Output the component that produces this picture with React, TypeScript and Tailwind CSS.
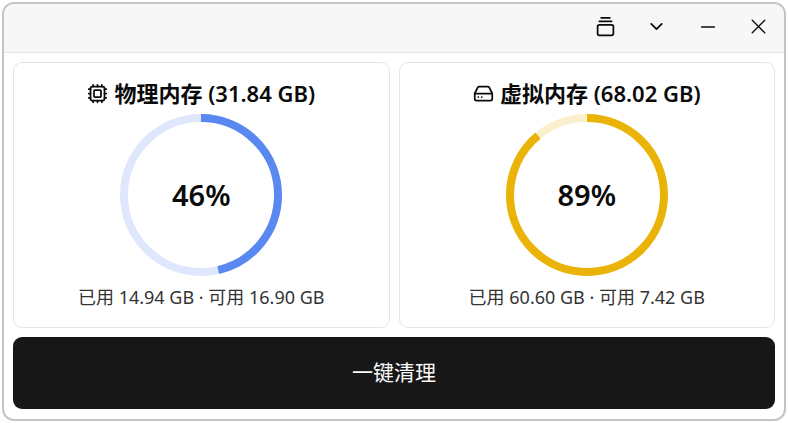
import { ChevronDown, Cpu, GalleryVerticalEnd, HardDrive, Minus, X } from "lucide-react";
import type { LucideIcon } from "lucide-react";

type Memory = {
  title: string;
  total: string;
  used: string;
  free: string;
  label: string;
  percent: number;
  color: string;
  icon: LucideIcon;
};

const memories: Memory[] = [
  {
    title: "物理内存",
    total: "31.84 GB",
    used: "14.94 GB",
    free: "16.90 GB",
    label: "46%",
    percent: 46.4,
    color: "text-[#5888f0]",
    icon: Cpu,
  },
  {
    title: "虚拟内存",
    total: "68.02 GB",
    used: "60.60 GB",
    free: "7.42 GB",
    label: "89%",
    percent: 89,
    color: "text-[#eab308]",
    icon: HardDrive,
  },
];

const windowActions = [
  { label: "精简模式", icon: GalleryVerticalEnd, size: 21, strokeWidth: 2 },
  { label: "菜单", icon: ChevronDown, size: 21, strokeWidth: 2 },
  { label: "最小化", icon: Minus, size: 22, strokeWidth: 1.5 },
  { label: "关闭", icon: X, size: 25, strokeWidth: 1.3 },
];

function Ring({ percent, label, color }: { percent: number; label: string; color: string }) {
  return (
    <div className="grid size-[162px] place-items-center">
      <svg className={`col-start-1 row-start-1 size-full -rotate-90 ${color}`} viewBox="0 0 162 162" fill="none" stroke="currentColor" strokeWidth="8" aria-hidden="true">
        <circle cx="81" cy="81" r="77" strokeOpacity="0.2" />
        <circle cx="81" cy="81" r="77" pathLength="100" strokeDasharray={`${percent} 100`} />
      </svg>
      <span className="col-start-1 row-start-1 text-[29px] font-semibold">{label}</span>
    </div>
  );
}

function MemoryCard({ memory }: { memory: Memory }) {
  const Icon = memory.icon;

  return (
    <section className="flex flex-1 flex-col items-center rounded-[9px] border border-[#e5e5e5] py-[9px]">
      <h2 className="flex h-[42px] items-center gap-1.5 whitespace-nowrap text-[22px] font-semibold">
        <Icon size={21} />
        <span>{memory.title} ({memory.total})</span>
      </h2>
      <Ring percent={memory.percent} label={memory.label} color={memory.color} />
      <p className="flex h-[42px] items-center whitespace-nowrap text-[18px] text-[#333333]">
        已用 {memory.used} · 可用 {memory.free}
      </p>
    </section>
  );
}

export default function App() {
  return (
    <div className="bg-white p-0.5 font-['Noto_Sans','Noto_Sans_CJK_SC',sans-serif] text-[#0a0a0a]">
      <div className="overflow-hidden rounded-xl border-2 border-[#c4c4c4] bg-white">
        <header className="flex h-[49px] items-center justify-end border-b border-[#e2e2e2] bg-[#f7f7f7]">
          {windowActions.map(({ label, icon: Icon, size, strokeWidth }) => (
            <button key={label} type="button" aria-label={label} className="flex h-full w-[51px] items-center justify-center pb-[3px]">
              <Icon size={size} strokeWidth={strokeWidth} />
            </button>
          ))}
        </header>
        <main className="flex flex-col gap-[9px] px-[9px] pt-[9px] pb-2.5">
          <div className="flex gap-[9px]">
            {memories.map((memory) => (
              <MemoryCard key={memory.title} memory={memory} />
            ))}
          </div>
          <button type="button" className="h-[72px] w-full rounded-[9px] bg-[#171717] text-[21px] text-[#fafafa]">
            一键清理
          </button>
        </main>
      </div>
    </div>
  );
}
